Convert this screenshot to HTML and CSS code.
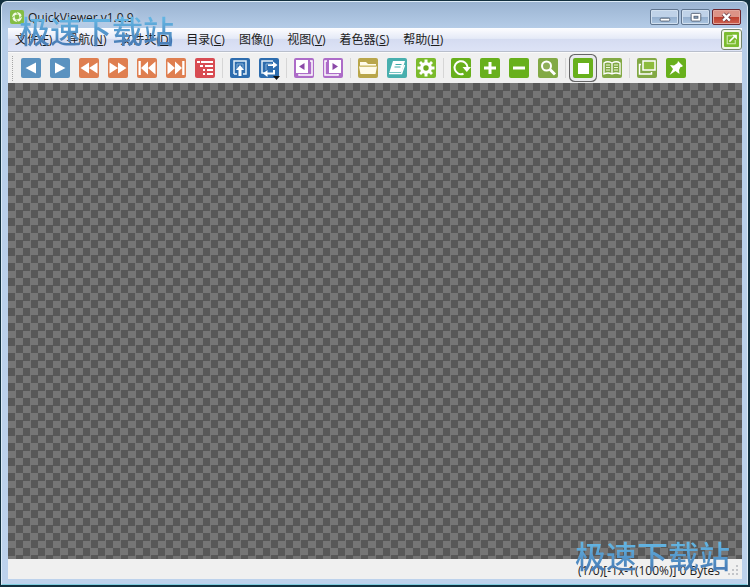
FILE: index.html
```
<!DOCTYPE html>
<html lang="zh-Hans">
<head>
  <meta charset="UTF-8">
  <meta name="viewport" content="width=device-width, initial-scale=1.0">
  <title>QuickViewer v1.0.9</title>
  <link rel="stylesheet" href="styles.css">
</head>
<body>
  <div class="window">
    <header class="titlebar">
      <svg class="app-icon" viewBox="0 0 14 14"><rect width="14" height="14" rx="2" fill="#84bd45"/><circle cx="7" cy="7" r="3.600" fill="none" stroke="#f3fae6" stroke-width="2.400"/><path d="M5 1l3 3.500M13 5L9.500 8M9 13L6 9.500M1 9l3.500-3" stroke="#84bd45"/></svg>
      <h1 class="title">QuickViewer v1.0.9</h1>
      <div class="window-buttons">
        <button class="win-btn" aria-label="最小化"><svg viewBox="0 0 28 15"><rect x="9.500" y="8.500" width="10" height="3" rx="1" fill="#fff" stroke="#566477"/></svg></button>
        <button class="win-btn" aria-label="最大化"><svg viewBox="0 0 28 15"><rect x="9.500" y="3.500" width="10" height="8" rx="1" fill="#fff" stroke="#566477"/><rect x="12.500" y="6.500" width="4" height="2" fill="#8ea9c8" stroke="#566477"/></svg></button>
        <button class="win-btn close" aria-label="关闭"><svg viewBox="0 0 28 15"><path d="M10.500 4l7 7M17.500 4l-7 7" stroke="#6b3a40" stroke-width="4"/><path d="M10.500 4l7 7M17.500 4l-7 7" stroke="#fff" stroke-width="2.400"/></svg></button>
      </div>
    </header>

    <nav class="menubar">
      <button class="menu">文件(<u>F</u>)</button>
      <button class="menu">导航(<u>N</u>)</button>
      <button class="menu">文件夹(<u>D</u>)</button>
      <button class="menu">目录(<u>C</u>)</button>
      <button class="menu">图像(<u>I</u>)</button>
      <button class="menu">视图(<u>V</u>)</button>
      <button class="menu">着色器(<u>S</u>)</button>
      <button class="menu">帮助(<u>H</u>)</button>
      <button class="external" aria-label="外部程序"><svg viewBox="0 0 14 14"><rect width="14" height="14" rx="1" fill="#7cbc30"/><path d="M8 3.500H3v7.500h7.500V7.500" fill="none" stroke="#d5edb4"/><path d="M5 9l5-5" stroke="#fff" stroke-width="1.500"/><path d="M7.500 2.500H12V7z" fill="#fff"/></svg></button>
    </nav>

    <div class="toolbar">
      <span class="handle"></span>
      <div class="group">
        <button class="tool blue" aria-label="上一页"><svg viewBox="0 0 20 20"><path d="M15 4.500v11L4.500 10z"/></svg></button>
        <button class="tool blue" aria-label="下一页"><svg viewBox="0 0 20 20"><path d="M5 4.500v11L15.500 10z"/></svg></button>
        <button class="tool orange" aria-label="快退"><svg viewBox="0 0 20 20"><path d="M10 4.500v11L1.500 10zM18.500 4.500v11L10 10z"/></svg></button>
        <button class="tool orange" aria-label="快进"><svg viewBox="0 0 20 20"><path d="M1.500 4.500v11L10 10zM10 4.500v11l8.500-5.500z"/></svg></button>
        <button class="tool orange" aria-label="第一页"><svg viewBox="0 0 20 20"><path d="M1.500 3h2.300v14H1.500zM11 3.500v13L4 10zM18.500 3.500v13L11 10z"/></svg></button>
        <button class="tool orange" aria-label="最后一页"><svg viewBox="0 0 20 20"><path d="M16.200 3h2.300v14h-2.300zM1.500 3.500v13L9 10zM9 3.500v13l7-6.500z"/></svg></button>
        <button class="tool red" aria-label="目录树"><svg viewBox="0 0 20 20"><path d="M2 3h3v2H2zM6 3h12v2H6zM5 7h3v2H5zM10 7h8v2h-8zM8 11h2v2H8zM12 11h6v2h-6zM8 15h2v2H8zM12 15h6v2h-6z"/></svg></button>
      </div>
      <div class="group">
        <button class="tool navy" aria-label="适合窗口"><svg viewBox="0 0 20 20"><path d="M4 16V3h12v13h-3M4 16h3" fill="none" stroke="#e4eff9" stroke-width="1.500"/><path d="M7 12V6h6v6" fill="none" stroke="#86b0d7"/><path d="M10 7l4 5h-2.500v6h-3v-6H6z"/></svg></button>
        <button class="tool navy" aria-label="适合宽度"><svg viewBox="0 0 20 20"><path d="M14 3H3v12h3" fill="none" stroke="#e4eff9" stroke-width="1.500"/><path d="M9 7h6M7 15.500h8V12" fill="none" stroke="#fff" stroke-width="2"/><path d="M7 12V6h6" fill="none" stroke="#86b0d7"/><path d="M14 3.500l4.500 3.500-4.500 3.500zM8.500 12v7L4 15.500z"/><path d="M14 18h7l-3.500 4z" fill="#111"/></svg></button>
      </div>
      <div class="group">
        <button class="tool purple" aria-label="上一卷"><svg viewBox="0 0 20 20"><path d="M2 2h12v13H2z"/><path d="M16 3h2v14H5v-1" fill="none" stroke="#fff" stroke-width="1.500"/><path d="M10.500 5v7L5 8.500z" fill="#8b49a8"/></svg></button>
        <button class="tool purple" aria-label="下一卷"><svg viewBox="0 0 20 20"><path d="M6 2h12v13H6z"/><path d="M4 3H2v14h13v-1" fill="none" stroke="#fff" stroke-width="1.500"/><path d="M9.500 5v7L15 8.500z" fill="#8b49a8"/></svg></button>
      </div>
      <div class="group">
        <button class="tool olive" aria-label="打开文件夹"><svg viewBox="0 0 20 20"><path d="M2 4h6l2 2h8v2H2zM1 8.500h18L17.500 16h-15z" fill="#fffbe8"/><path d="M2 8h16" stroke="#c6b457"/></svg></button>
        <button class="tool teal" aria-label="书架"><svg viewBox="0 0 20 20"><path d="M6 3h12l-3.500 11H2.500z"/><path d="M2 15.500h12.500L17.500 7" fill="none" stroke="#fff" stroke-width="1.500"/><path d="M8.500 6.500h6M7.500 9h6" stroke="#3ba9a7"/></svg></button>
        <button class="tool lime" aria-label="选项"><svg viewBox="0 0 20 20"><path d="M8.500 1.500h3v17h-3zM1.500 8.500h17v3h-17zM3 5l2-2 12 12-2 2zM15 3l2 2L5 17l-2-2z"/><circle cx="10" cy="10" r="6"/><circle cx="10" cy="10" r="2.700" fill="#6ca91c"/></svg></button>
      </div>
      <div class="group">
        <button class="tool green" aria-label="旋转"><svg viewBox="0 0 20 20"><path d="M12.500 15.700A6.500 6.500 0 1 1 16.500 9" fill="none" stroke="#fff" stroke-width="2"/><path d="M11.500 9H20l-4.200 5z"/></svg></button>
        <button class="tool green" aria-label="放大"><svg viewBox="0 0 20 20"><path d="M8.500 4h3v4.500H16v3h-4.500V16h-3v-4.500H4v-3h4.500z"/></svg></button>
        <button class="tool green" aria-label="缩小"><svg viewBox="0 0 20 20"><path d="M4 8.500h12v3H4z"/></svg></button>
        <button class="tool moss" aria-label="查看"><svg viewBox="0 0 20 20"><circle cx="8.500" cy="8" r="4.500" fill="#8fae5a" stroke="#fff" stroke-width="2"/><path d="M12 11.500l5 5" stroke="#fff" stroke-width="3"/></svg></button>
      </div>
      <div class="group">
        <button class="tool green selected" aria-label="单页" aria-pressed="true"><svg viewBox="0 0 20 20"><path d="M5 5h11v11H5z"/></svg></button>
        <button class="tool moss" aria-label="双页"><svg viewBox="0 0 20 20"><path d="M10 5Q5.500 2.500 2 5v11q4-2 8 0 4-2 8 0V5q-3.500-2.500-8 0zv11" fill="none" stroke="#fff" stroke-width="1.300"/><path d="M4 7h4M4 9.500h4M4 12h4M12 7h4M12 9.500h4M12 12h4" stroke="#eef7d9"/></svg></button>
      </div>
      <div class="group">
        <button class="tool moss" aria-label="全屏"><svg viewBox="0 0 20 20"><path d="M6 3h12v9H6z" fill="#8dbb3d" stroke="#fff" stroke-width="1.500"/><path d="M4 6.500H2.500v9.500h12v-2" fill="none" stroke="#fff" stroke-width="1.500"/></svg></button>
        <button class="tool green" aria-label="置顶"><svg viewBox="0 0 20 20"><path d="M12 3l5 5-1.500 1-1 0-1.500 3 .5 4-4-3L3.500 17 7 11 4 7l4 .5L11.500 5z"/></svg></button>
      </div>
    </div>

    <main class="canvas"></main>

    <footer class="statusbar">
      <span>(1/0)[-1x-1(100%)] 0 Bytes</span>
      <svg class="grip" viewBox="0 0 12 12"><path d="M8 1h2v2H8zM8 5h2v2H8zM4 5h2v2H4zM8 9h2v2H8zM4 9h2v2H4zM0 9h2v2H0z" fill="#c2c4c8"/></svg>
    </footer>
  </div>

  <div class="watermark top">极速下载站</div>
  <div class="watermark bottom">极速下载站</div>
</body>
</html>
```
FILE: styles.css
```
* {
  box-sizing: border-box;
}

body {
  margin: 0;
  height: 100vh;
  overflow: hidden;
  background-color: #12303f;
  padding: 1px 2px 2px 1px;
  font-family: "Open Sans", "Noto Sans CJK SC", sans-serif;
  font-size: 12px;
  color: #1c1c1c;
}

button {
  padding: 0;
  border: none;
  background: none;
  font: inherit;
  color: inherit;
}

svg {
  display: block;
}

.window {
  height: 100%;
  display: flex;
  flex-direction: column;
  padding: 0 5px 5px 6px;
  border: 1px solid #dcebf7;
  border-bottom-color: #7fd0e2;
  border-radius: 6px 6px 0 0;
  background: linear-gradient(#9bb4d2, #b7cee9 28px, #bdd2ec);
}

.titlebar {
  height: 26px;
  display: flex;
  align-items: center;
  gap: 4px;
  padding: 4px 1px 0 2px;
}

.app-icon {
  width: 14px;
  height: 14px;
}

.title {
  margin: 0;
  flex: 1;
  font-size: 12px;
  font-weight: normal;
  text-shadow: 0 0 6px #e4eef8;
}

.window-buttons {
  display: flex;
  gap: 2px;
}

.win-btn {
  width: 29px;
  height: 16px;
  border: 1px solid #60758f;
  border-radius: 2px;
  box-shadow: inset 0 0 0 1px #d0dfef;
  background: linear-gradient(#bfd2e8 50%, #93aecd 50%, #acc6e2);
}

.win-btn.close {
  border-color: #6c2730;
  box-shadow: inset 0 0 0 1px #e2a69c;
  background: linear-gradient(#dc9387 50%, #bd3d2d 50%, #cf6350);
}

.menubar {
  height: 24px;
  display: flex;
  align-items: center;
  gap: 14px;
  padding-left: 7px;
  border-bottom: 1px solid #b9bfcc;
  background: linear-gradient(#fdfdff, #e5eaf7 45%, #d5dcf1 50%, #dde3f6);
}

.menu {
  padding-bottom: 2px;
  white-space: nowrap;
}

.external {
  display: grid;
  place-items: center;
  width: 21px;
  height: 21px;
  margin-left: auto;
  border: 1px solid #75856c;
  border-radius: 3px;
  background-color: #f1f6e8;
}

.external svg {
  width: 15px;
  height: 15px;
}

.toolbar {
  height: 31px;
  display: flex;
  align-items: center;
  background-color: #f0f0f0;
  border-top: 1px solid #fafafa;
}

.handle {
  height: 25px;
  margin: 0 8px 0 4px;
  border-left: 1px dotted #a5a5a5;
}

.group {
  display: flex;
  align-items: center;
  gap: 9px;
}

.group + .group {
  margin-left: 7px;
  padding-left: 7px;
  border-left: 1px solid #d6d6d6;
}

.tool {
  width: 20px;
  height: 20px;
  border-radius: 2px;
}

.tool svg {
  width: 20px;
  height: 20px;
  fill: #fff;
  overflow: visible;
}

.blue { background-color: #5a92c0; }
.orange { background-color: #df7f50; }
.red { background-color: #d84c52; }
.navy { background-color: #2d6cae; }
.purple { background-color: #ad6cc8; }
.olive { background-color: #b9a64a; }
.teal { background-color: #48afae; }
.lime { background-color: #7bbb2c; }
.green { background-color: #68b01c; }
.moss { background-color: #82a945; }

.selected {
  outline: 3px solid #e9eaed;
  box-shadow: 0 0 0 4px #666;
}

/* transparency checkerboard */
.canvas {
  flex: 1;
  background: repeating-conic-gradient(#767676 0 25%, #585858 0 50%) 0 0 / 15px 15px;
}

.statusbar {
  height: 20px;
  display: flex;
  align-items: center;
  justify-content: flex-end;
  gap: 8px;
  padding: 2px 2px 0 0;
  background-color: #f0f0f0;
}

.grip {
  width: 12px;
  height: 12px;
}

.watermark {
  position: absolute;
  font-family: "Noto Sans CJK SC", sans-serif;
  font-size: 31px;
  font-weight: 500;
  line-height: 36px;
  color: transparent;
  background: linear-gradient(#62b4e2 20%, #4a7fb8 85%);
  background-clip: text;
  -webkit-background-clip: text;
  pointer-events: none;
}

.watermark.top {
  left: 19px;
  top: 12px;
}

.watermark.bottom {
  right: 20px;
  bottom: 14px;
}
```
